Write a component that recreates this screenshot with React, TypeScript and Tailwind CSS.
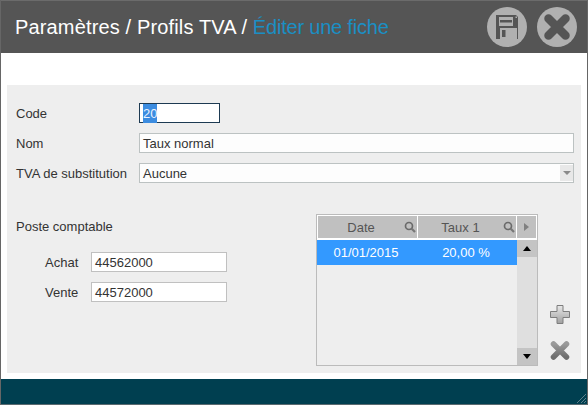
export default function App() {
  const font = { fontFamily: '"Liberation Sans", Arial, sans-serif' };
  return (
    <div style={font} className="flex h-[405px] w-[588px] flex-col overflow-hidden border-x border-x-[#666666] bg-white text-[13px] leading-[18px] text-[#333333]">
      <header className="flex h-[53px] shrink-0 items-center justify-between border-t border-t-[#6b6b6b] bg-[#555555] pl-[14px] pr-[10px]">
        <h1 className="text-[20px] font-normal tracking-[0.15px] text-white">
          Paramètres / Profils TVA / <span className="tracking-[-0.2px] text-[#1a8fc4]">Éditer une fiche</span>
        </h1>
        <div className="flex gap-[10px]">
          <button className="flex h-10 w-10 items-center justify-center rounded-full bg-[#b0b0b0]">
            <svg width="22" height="24" viewBox="0 0 22 24">
              <path d="M0 0h20l2 2v22H0z" fill="#555555" />
              <rect x="3" y="2" width="14" height="9" fill="#b0b0b0" />
              <rect x="4" y="5" width="12" height="2.5" fill="#555555" />
              <rect x="19.5" y="1.5" width="1.5" height="1.5" fill="#b0b0b0" />
              <rect x="4" y="13" width="17" height="11" fill="#b0b0b0" />
              <rect x="6" y="15" width="3.5" height="7" fill="#555555" />
            </svg>
          </button>
          <button className="flex h-10 w-10 items-center justify-center rounded-full bg-[#b0b0b0]">
            <svg width="28" height="28" viewBox="0 0 28 28">
              <path d="M5.5 5.5L22.5 22.5M22.5 5.5L5.5 22.5" stroke="#555555" strokeWidth="8.5" strokeLinecap="round" />
            </svg>
          </button>
        </div>
      </header>

      <main className="flex-1 pl-[6px] pr-[6px] pt-[32px] pb-[6px]">
        <div className="flex h-[288px] flex-col bg-[#eeeeee] pl-[9px] pr-[7px] pt-[18px]">
          <div className="flex flex-col gap-[10px]">
            <div className="flex h-5 items-center">
              <label className="w-[123px] pt-px">Code</label>
              <div className="flex h-5 w-[81px] items-center border border-[#1d3a52] bg-white px-[3px]">
                <span className="bg-[#3c8ce0] pt-px text-[#eaf3ff]">20</span>
              </div>
            </div>
            <div className="flex h-5 items-center">
              <label className="w-[123px] pt-px">Nom</label>
              <div className="flex h-5 flex-1 items-center border border-[#bcc2c2] bg-[#fdfdfd] px-[3px] pt-px">Taux normal</div>
            </div>
            <div className="flex h-5 items-center">
              <label className="w-[123px] pt-px">TVA de substitution</label>
              <div className="flex h-5 flex-1 items-center justify-between border border-[#bcc2c2] bg-[#fdfdfd] pl-[3px]">
                <span className="pt-px">Aucune</span>
                <span className="flex h-[16px] w-[13px] items-center justify-center bg-[#e8e8e8]">
                  <svg width="8" height="4" viewBox="0 0 8 4"><path d="M0 0h8L4 4z" fill="#8a8a8a" /></svg>
                </span>
              </div>
            </div>
          </div>

          <div className="mt-[31px] flex">
            <div className="w-[300px]">
              <div className="mt-[4px]">Poste comptable</div>
              <div className="mt-[16px] flex flex-col gap-[10px] pl-[29px]">
                <div className="flex h-5 items-center">
                  <label className="w-[46px] pt-px">Achat</label>
                  <div className="flex h-5 w-[136px] items-center border border-[#c0c0c0] bg-white px-[3px] pt-px">44562000</div>
                </div>
                <div className="flex h-5 items-center">
                  <label className="w-[46px] pt-px">Vente</label>
                  <div className="flex h-5 w-[136px] items-center border border-[#c0c0c0] bg-white px-[3px] pt-px">44572000</div>
                </div>
              </div>
            </div>

            <div className="flex h-[152px] w-[222px] flex-col border border-[#bbbbbb]">
              <div className="flex h-[25px] shrink-0 gap-px border border-white border-b-2 bg-white">
                <div className="flex w-[99px] items-center bg-[#c0c0c0] text-[#555555]">
                  <span className="flex-1 pt-px text-center">Date</span>
                  <Loupe />
                </div>
                <div className="flex w-[98px] items-center bg-[#c0c0c0] text-[#555555]">
                  <span className="flex-1 pt-px text-center">Taux 1</span>
                  <Loupe />
                </div>
                <div className="flex flex-1 items-center justify-center bg-[#c0c0c0]">
                  <svg width="5" height="8" viewBox="0 0 5 8"><path d="M0 0l5 4-5 4z" fill="#808080" /></svg>
                </div>
              </div>
              <div className="flex flex-1">
                <div className="flex-1">
                  <div className="flex h-[25px] items-center bg-[#3399ff] text-white">
                    <span className="w-[98px] text-center">01/01/2015</span>
                    <span className="w-[102px] text-center">20,00 %</span>
                  </div>
                </div>
                <div className="flex w-[20px] flex-col justify-between bg-[#dfdfdf]">
                  <div className="flex h-[17px] items-center justify-center bg-[#c4c4c4]">
                    <svg width="8" height="5" viewBox="0 0 8 5"><path d="M4 0l4 5H0z" fill="#000" /></svg>
                  </div>
                  <div className="flex h-[17px] items-center justify-center bg-[#c4c4c4]">
                    <svg width="8" height="5" viewBox="0 0 8 5"><path d="M0 0h8L4 5z" fill="#000" /></svg>
                  </div>
                </div>
              </div>
            </div>

            <div className="ml-[12px] flex h-[152px] flex-col justify-end gap-[17px] pb-[6px]">
              <svg width="20" height="19" viewBox="0 0 20 19">
                <defs>
                  <linearGradient id="p" x1="0" y1="0" x2="0" y2="1">
                    <stop offset="0" stopColor="#e8e8e8" />
                    <stop offset="1" stopColor="#a0a0a0" />
                  </linearGradient>
                </defs>
                <path d="M7 .5h6v6h6.5v6H13v6H7v-6H.5v-6H7z" fill="url(#p)" stroke="#7d7d7d" />
              </svg>
              <svg width="20" height="19" viewBox="0 0 20 19">
                <defs>
                  <linearGradient id="x" x1="0" y1="0" x2="0" y2="1">
                    <stop offset="0" stopColor="#9a9a9a" />
                    <stop offset="1" stopColor="#6e6e6e" />
                  </linearGradient>
                </defs>
                <path d="M3.5 3L16.5 16M16.5 3L3.5 16" stroke="url(#x)" strokeWidth="5.5" strokeLinecap="round" />
              </svg>
            </div>
          </div>
        </div>
      </main>

      <footer className="relative h-[26px] shrink-0 border-b border-b-[#5a6a70] bg-[#003f50]">
        <svg className="absolute bottom-0 right-0" width="12" height="12" viewBox="0 0 12 12">
          <path d="M11 2L2 11M11 6L6 11M11 9L9 11" stroke="#5f7f8a" strokeWidth="1" />
        </svg>
      </footer>
    </div>
  );
}

function Loupe() {
  return (
    <svg className="mr-[1px]" width="12" height="12" viewBox="0 0 12 12">
      <circle cx="5" cy="5" r="3.5" fill="none" stroke="#6a6a6a" strokeWidth="1.7" />
      <path d="M7.5 7.5l3.5 3.5" stroke="#777777" strokeWidth="2.2" />
    </svg>
  );
}
